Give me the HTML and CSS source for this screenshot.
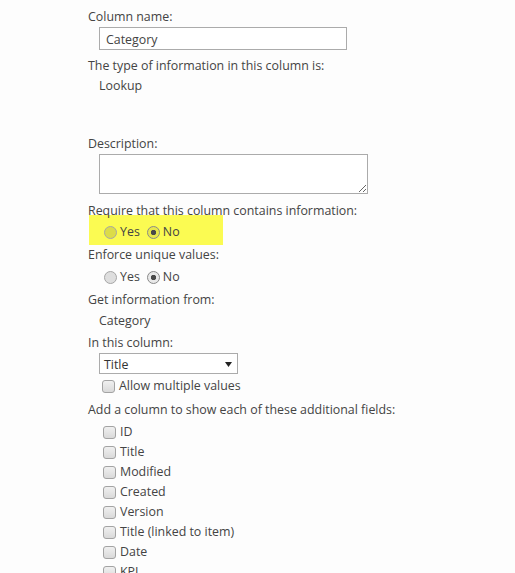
FILE: index.html
```html
<!DOCTYPE html>
<html lang="en">
<head>
<meta charset="utf-8">
<title>Column settings</title>
<link rel="stylesheet" href="styles.css">
</head>
<body>
<div class="form">
  <div class="label">Column name:</div>
  <input class="textbox" type="text" value="Category">

  <div class="label type-label">The type of information in this column is:</div>
  <div class="value">Lookup</div>

  <div class="label desc-label">Description:</div>
  <textarea class="textarea"></textarea>

  <div class="label require-label">Require that this column contains information:</div>
  <div class="radios highlight">
    <label class="opt"><input type="radio" name="req"><span>Yes</span></label>
    <label class="opt"><input type="radio" name="req" checked><span>No</span></label>
  </div>

  <div class="label enforce-label">Enforce unique values:</div>
  <div class="radios plain">
    <label class="opt"><input type="radio" name="uniq"><span>Yes</span></label>
    <label class="opt"><input type="radio" name="uniq" checked><span>No</span></label>
  </div>

  <div class="label get-label">Get information from:</div>
  <div class="value cat-value">Category</div>

  <div class="label col-label">In this column:</div>
  <div class="select">
    <span>Title</span>
    <svg class="arrow" width="7" height="5" viewBox="0 0 7 5"><path d="M0 0H7L3.5 5Z" fill="#222"/></svg>
  </div>
  <label class="check allow"><input type="checkbox"><span>Allow multiple values</span></label>

  <div class="label add-label">Add a column to show each of these additional fields:</div>
  <div class="checks">
    <label class="check"><input type="checkbox"><span>ID</span></label>
    <label class="check"><input type="checkbox"><span>Title</span></label>
    <label class="check"><input type="checkbox"><span>Modified</span></label>
    <label class="check"><input type="checkbox"><span>Created</span></label>
    <label class="check"><input type="checkbox"><span>Version</span></label>
    <label class="check"><input type="checkbox"><span>Title (linked to item)</span></label>
    <label class="check"><input type="checkbox"><span>Date</span></label>
    <label class="check"><input type="checkbox"><span>KPI</span></label>
  </div>
</div>
</body>
</html>
```
FILE: styles.css
```css
html, body {
  margin: 0;
  padding: 0;
  background: #fdfdfd;
  overflow: hidden;
}

body {
  font-family: "Open Sans", "Noto Sans", "Liberation Sans", sans-serif;
  font-size: 12.4px;
  color: #444;
}

.form {
  padding: 6px 0 0 88px;
}

.label,
.value {
  height: 20px;
  line-height: 22px;
  white-space: nowrap;
}

.value {
  padding-left: 11px;
}

.textbox {
  display: block;
  box-sizing: border-box;
  width: 248px;
  height: 23px;
  margin: 1px 0 0 11px;
  padding: 1px 6px 0;
  border: 1px solid #ababab;
  background: #fff;
  font: inherit;
  color: #444;
  outline: none;
}

.type-label { margin-top: 5px; }
.desc-label { margin-top: 38px; }

.textarea {
  display: block;
  box-sizing: border-box;
  width: 269px;
  height: 40px;
  margin: 1px 0 0 11px;
  border: 1px solid #ababab;
  background: #fff;
  font: inherit;
  resize: both;
  outline: none;
}

.require-label { margin-top: 6px; }

.radios {
  display: flex;
  align-items: center;
  height: 20px;
  padding-left: 16px;
}

.highlight {
  box-sizing: border-box;
  width: 134px;
  height: 30px;
  margin: -5px 0 0 1px;
  padding: 7px 0 3px 15px;
  background: #fbfb52;
}

.plain {
  margin-top: 3px;
}

.enforce-label { margin-top: -1px; }

.opt {
  display: flex;
  align-items: center;
  margin-right: 7px;
  line-height: 20px;
}

.opt input {
  appearance: none;
  -webkit-appearance: none;
  box-sizing: border-box;
  width: 13px;
  height: 13px;
  margin: 0 3px 0 0;
  border: 1px solid #a6a6a6;
  border-radius: 50%;
  background: rgba(0, 0, 0, 0.12);
}

.opt input:checked {
  background:
    radial-gradient(circle at center, #4a4a4a 0 2.4px, transparent 3px),
    rgba(0, 0, 0, 0.08);
  border-color: #8a8a8a;
}

.get-label { margin-top: 2px; }
.cat-value { margin-top: 1px; }
.col-label { margin-top: 2px; }

.select {
  box-sizing: border-box;
  display: flex;
  align-items: center;
  justify-content: space-between;
  width: 139px;
  height: 21px;
  margin: 1px 0 0 11px;
  padding: 1px 5px 0 4px;
  border: 1px solid #ababab;
  background: #fff;
  color: #333;
}

.arrow {
  display: block;
}

.check {
  display: flex;
  align-items: center;
  height: 20px;
  line-height: 20px;
  padding-left: 15px;
  white-space: nowrap;
}

.check input {
  appearance: none;
  -webkit-appearance: none;
  box-sizing: border-box;
  width: 13px;
  height: 13px;
  margin: 0 4px 0 0;
  border: 1px solid #a3a3a3;
  border-radius: 3px;
  background: linear-gradient(#f0f0f0, #d9d9d9);
}

.allow {
  margin-top: 2px;
  padding-left: 14px;
}

.add-label { margin-top: 3px; }

.checks {
  margin-top: 3px;
}
```
